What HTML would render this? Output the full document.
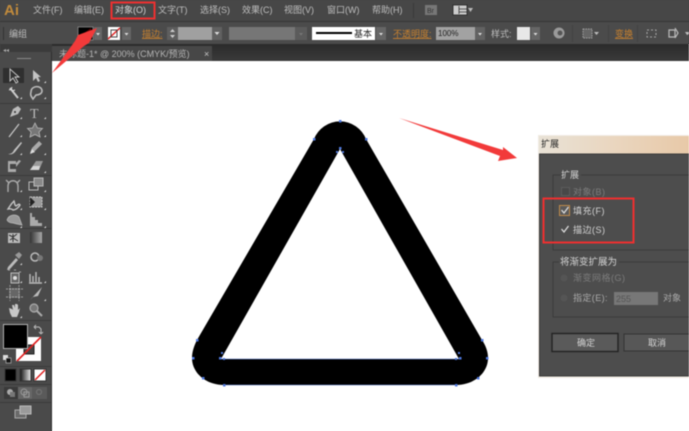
<!DOCTYPE html>
<html><head><meta charset="utf-8">
<style>
html,body{margin:0;padding:0;width:689px;height:431px;overflow:hidden;background:linear-gradient(#474747 0 44px,transparent 0),linear-gradient(90deg,#4a4a4a 0 52px,#fff 0)}
svg{display:block;filter:blur(.4px)}
text{font-family:"Liberation Sans","Noto Sans CJK SC",sans-serif;font-size:9px;fill:#bdbdbd}
.o{fill:#c8812e}
.d{fill:#7c7c7c}
.w{fill:#d4d4d4}
</style></head><body>
<svg width="689" height="431" viewBox="0 0 689 431" xmlns="http://www.w3.org/2000/svg">
<defs>
<linearGradient id="tb" x1="0" y1="0" x2="0" y2="1"><stop offset="0" stop-color="#2b2b2b"/><stop offset="1" stop-color="#3a3a3a"/></linearGradient>
<linearGradient id="tt" x1="0" y1="0" x2="1" y2="0"><stop offset="0" stop-color="#e9e2d6"/><stop offset=".5" stop-color="#ead6bf"/><stop offset="1" stop-color="#e8c9a8"/></linearGradient>
<linearGradient id="gr" x1="0" y1="0" x2="1" y2="0"><stop offset="0" stop-color="#111"/><stop offset="1" stop-color="#eee"/></linearGradient>
<linearGradient id="gs" x1="0" y1="0" x2="1" y2="0"><stop offset="0" stop-color="#333"/><stop offset="1" stop-color="#aaa"/></linearGradient>
</defs>
<!-- chrome -->
<rect width="689" height="21" fill="#474747"/>
<rect y="21" width="689" height="1" fill="#353535"/>
<rect y="22" width="689" height="23" fill="#4b4b4b"/>
<rect y="44" width="689" height="17" fill="url(#tb)"/>
<rect x="0" y="44" width="52" height="387" fill="#4a4a4a"/>
<rect x="51" y="44" width="1" height="387" fill="#2e2e2e"/>
<rect x="52" y="61" width="637" height="370" fill="#fff"/>
<rect x="52" y="46" width="160" height="15" fill="#474747"/>
<rect y="44" width="52" height="8" fill="#3b3b3b"/>
<!-- logo + menu -->
<text x="4" y="15" style="font-size:15px;font-weight:bold;fill:#c08a3c">Ai</text>
<text x="33" y="13">文件(F)</text>
<text x="74" y="13">编辑(E)</text>
<text x="115" y="13" class="w">对象(O)</text>
<text x="158" y="13">文字(T)</text>
<text x="200" y="13">选择(S)</text>
<text x="242" y="13">效果(C)</text>
<text x="284" y="13">视图(V)</text>
<text x="327" y="13">窗口(W)</text>
<text x="372" y="13">帮助(H)</text>
<rect x="413" y="3" width="1" height="15" fill="#393939"/>
<rect x="425" y="5" width="12" height="10" fill="#777"/><text x="427" y="13" style="font-size:7px;fill:#333">Br</text>
<rect x="453" y="5" width="14" height="10" fill="#ccc" stroke="#222" stroke-width=".8"/><path d="M459 6v8M459 9h8M459 12h8" stroke="#333" fill="none" stroke-width=".8"/>
<path d="M468 8h5l-2.500 4z" fill="#bbb"/>
<rect x="111.500" y="2.500" width="43" height="16" fill="none" stroke="#ee3030" stroke-width="2"/>
<!-- control bar -->
<rect x="3" y="27" width="1" height="13" fill="#333"/>
<text x="9" y="37">编组</text>
<rect x="78" y="27" width="15" height="13" fill="#000" stroke="#aaa" stroke-width=".6"/><path d="M79 37l12-9v9z" fill="#900" opacity=".6"/>
<rect x="94" y="27" width="8" height="13" fill="#666"/><path d="M96 33h4l-2 2.500z" fill="#ddd"/>
<rect x="108" y="27" width="12" height="13" fill="#fff"/><path d="M108 39l12-11" stroke="#e02020" stroke-width="1.500"/><rect x="111" y="30" width="6" height="7" fill="none" stroke="#444"/>
<rect x="122" y="27" width="9" height="13" fill="#666"/><path d="M124.500 33h4l-2 2.500z" fill="#ddd"/>
<text x="142" y="37" class="o" text-decoration="underline">描边:</text>
<rect x="167" y="27" width="11" height="13" fill="#5e5e5e"/><path d="M170 32l2.500-3 2.500 3zM170 35l2.500 3 2.500-3z" fill="#ccc"/>
<rect x="178" y="27" width="34" height="13" fill="#a0a0a0"/>
<rect x="212" y="27" width="10" height="13" fill="#616161"/><path d="M214.500 32h5l-2.500 3z" fill="#ddd"/>
<rect x="229" y="27" width="66" height="13" fill="#767676"/>
<rect x="295" y="27" width="12" height="13" fill="#5b5b5b"/><path d="M299 33h4l-2 2.500z" fill="#777"/>
<rect x="312" y="27" width="63" height="13" fill="#fff"/><rect x="316" y="32" width="36" height="2" fill="#000"/>
<text x="354" y="37" style="fill:#222">基本</text>
<rect x="376" y="27" width="10" height="13" fill="#666"/><path d="M379 33h4l-2 2.500z" fill="#ddd"/>
<text x="393" y="37" class="o" text-decoration="underline">不透明度:</text>
<rect x="436" y="27" width="39" height="13" fill="#a2a2a2"/><text x="438" y="36" style="font-size:8px;fill:#222">100%</text>
<rect x="475" y="27" width="10" height="13" fill="#626262"/><path d="M478 33h4l-2 2.500z" fill="#ddd"/>
<text x="491" y="37">样式:</text>
<rect x="517" y="27" width="13" height="13" fill="#e8e8e8"/>
<rect x="531" y="27" width="9" height="13" fill="#666"/><path d="M533.500 33h4l-2 2.500z" fill="#ddd"/>
<circle cx="559" cy="33" r="5.500" fill="#9a9a9a"/><circle cx="560" cy="33" r="2.500" fill="#555"/>
<rect x="583" y="29" width="9" height="9" fill="#666" stroke="#bbb" stroke-width=".7" stroke-dasharray="1.500 1"/><path d="M594 32h5l-2.500 3z" fill="#bbb"/>
<rect x="572" y="25" width="1" height="17" fill="#424242"/><rect x="608" y="25" width="1" height="17" fill="#424242"/><rect x="637" y="25" width="1" height="17" fill="#424242"/>
<text x="615" y="37" class="o" text-decoration="underline">变换</text>
<rect x="647" y="30" width="9" height="7" fill="none" stroke="#c4c4c4" stroke-width=".8" stroke-dasharray="2 2"/>
<path d="M669 30h6v7h-6zM675 28l3 5-3 5" fill="none" stroke="#bbb" stroke-width="1.200"/>
<path d="M685 32h4v2l-2 1z" fill="#bbb"/>
<!-- tab -->
<text x="59" y="57" style="fill:#b4b4b4">未标题-1* @ 200% (CMYK/预览)</text>
<text x="204" y="57" style="fill:#c8c8c8">×</text>
<!-- tool panel -->
<text x="3" y="52" style="font-size:6px;fill:#aaa">◂◂</text>
<rect x="17" y="58" width="14" height="1" fill="#8a8a8a"/>
<rect x="3" y="68" width="21" height="15" fill="#2f2f2f"/>
<g fill="none" stroke="#333" stroke-width="0">
<rect y="103" x="0" width="51" height="1" fill="#3a3a3a"/><rect y="175" x="0" width="51" height="1" fill="#3a3a3a"/><rect y="228" x="0" width="51" height="1" fill="#3a3a3a"/><rect y="320" x="0" width="51" height="1" fill="#3a3a3a"/><rect y="366" x="0" width="51" height="1" fill="#3a3a3a"/><rect y="384" x="0" width="51" height="1" fill="#3a3a3a"/><rect y="402" x="0" width="51" height="1" fill="#3a3a3a"/>
</g>
<!-- row icons -->
<path d="M10 69l0 12 3-3 3 5 2-1-3-5h4z" fill="#333" stroke="#ccc" stroke-width=".9"/>
<path d="M33 70v11l3-3 2 4 2-1-2-4h3z" fill="#c4c4c4"/>
<path d="M10 88l8 10" stroke="#ccc" stroke-width="2"/><path d="M12 87l-1 3M9 90l3-1M15 90l-3 1" stroke="#ddd"/>
<path d="M31 92c0-7 11-7 11-1 0 3-4 4-6 4l-3 4c-2-3-3-4-2-7z" fill="none" stroke="#bbb" stroke-width="1.600"/>
<path d="M10 117l3-8 5-3 3 3-3 5-8 3z" fill="#bbb"/><circle cx="15" cy="112" r="1" fill="#333"/>
<text x="30" y="118" style="font-family:'Liberation Serif',serif;font-size:14px;fill:#bbb">T</text>
<path d="M9 137l10-13" stroke="#c8c8c8" stroke-width="1.200"/>
<path d="M35 123l2.500 5 5 .5-3.500 3.500 1 5-5-2.500-5 2.500 1-5-3.500-3.500 5-.5z" fill="#777" stroke="#bbb" stroke-width=".8"/>
<path d="M8 154c4 0 5-2 6-4l7-8 1 1-7 9c-2 2-4 3-7 2z" fill="#c4c4c4"/>
<path d="M30 153l2-5 7-7 3 3-7 7z" fill="#aaa"/><path d="M30 154l2-5 3 3z" fill="#ddd"/>
<path d="M8 161h8v2l3-3 2 1-5 6v5H8z" fill="#aaa"/><rect x="10" y="164" width="6" height="5" fill="#444"/>
<path d="M30 170l6-9h7l-4 9z" fill="#999"/><path d="M30 170l3-4h7l-1 4z" fill="#d5d5d5"/>
<path d="M8 192v-6c0-7 10-7 10 0v6M6 180l3 3M20 180l-3 3" fill="none" stroke="#aaa" stroke-width="1.400"/>
<rect x="29" y="182" width="9" height="8" fill="#4a4a4a" stroke="#bbb"/><rect x="34" y="178" width="9" height="8" fill="#888" stroke="#bbb"/>
<path d="M8 209c2-3 3-5 6-8 1 2 0 4 2 5 2-1 3-3 4-1-1 2-4 5-7 5-2-2-3-1-5-1z" fill="none" stroke="#c4c4c4" stroke-width="1.400"/>
<rect x="30" y="197" width="12" height="10" fill="#999" stroke="#ccc" stroke-dasharray="2 1"/><path d="M30 197l5 5-5 5z" fill="#222"/>
<path d="M7 220c2-6 9-6 12-3l3 8-5-1-4-1c-3 0-5-1-6-3z" fill="#999" stroke="#bbb" stroke-width=".7"/>
<path d="M30 213h2v4h3v3h3v3h4v3H30z" fill="#aaa"/>
<rect x="8" y="233" width="12" height="10" fill="#bbb"/><path d="M9 235l4 2 4-3M10 240l3-2 5 3M13 234v8" stroke="#333" fill="none"/>
<rect x="30" y="232" width="12" height="11" fill="url(#gs)"/>
<path d="M8 267l8-9 2 2-8 9-3 1z" fill="#bbb"/><path d="M15 255l4-3 3 3-3 4z" fill="#999"/>
<circle cx="35" cy="257" r="4" fill="none" stroke="#bbb" stroke-width="1.500"/><circle cx="40" cy="258" r="3" fill="#777"/>
<rect x="11" y="273" width="8" height="10" fill="#666" stroke="#bbb"/><circle cx="15" cy="278" r="2" fill="#ddd"/><path d="M8 270h2M14 270h2M19 272h2" stroke="#aaa"/>
<path d="M30 282v-8M33 282v-6M36 282v-10M39 282v-5M29 283h13" stroke="#bbb" stroke-width="1.400"/>
<rect x="9" y="288" width="11" height="10" fill="#666"/><path d="M6 289h17M6 297h17M10 285v16M19 285v16" stroke="#bbb" stroke-width=".7" stroke-dasharray="2 1"/>
<path d="M30 300l12-13-4 9-5 1z" fill="#bbb"/>
<path d="M9 308l1 5 2 4h5l2-5 1-4-2 2v-5l-1-1v3-3h-2v4l-1-3h-2l1 5-1-1z" fill="#c8c8c8"/>
<circle cx="34" cy="308" r="4" fill="#777" stroke="#aaa" stroke-width="1.200"/><path d="M37 311l5 5" stroke="#aaa" stroke-width="2"/>
<!-- small triangles -->
<path d="M46 83l-2 0 2-2zM22 99h-2l2-2zM46 99h-2l2-2zM22 119h-2l2-2zM46 119h-2l2-2zM22 137h-2l2-2zM46 137h-2l2-2zM22 155h-2l2-2zM46 155h-2l2-2zM46 173h-2l2-2zM22 192h-2l2-2zM46 192h-2l2-2zM22 210h-2l2-2zM46 210h-2l2-2zM22 228h-2l2-2zM46 228h-2l2-2zM22 265h-2l2-2zM22 283h-2l2-2zM46 283h-2l2-2zM46 301h-2l2-2zM22 318h-2l2-2z" fill="#ddd"/>
<!-- fill / stroke -->
<rect x="16" y="337" width="25" height="24" fill="#fff"/>
<rect x="24" y="345" width="10" height="9" fill="#444" stroke="#222"/>
<path d="M17 361l24-24" stroke="#e02020" stroke-width="1.600"/>
<rect x="3.500" y="324.500" width="24" height="24" fill="#000" stroke="#b0b0b0"/>
<path d="M35 327h4l2 2v4M34 327l2-2M34 327l2 2M41 334l-2-2M41 334l2-2" fill="none" stroke="#bbb"/>
<rect x="3" y="355" width="5" height="5" fill="#ddd"/><rect x="6" y="358" width="5" height="5" fill="#111" stroke="#ccc" stroke-width=".6"/>
<rect x="5" y="369" width="11" height="12" fill="#000" stroke="#333"/>
<rect x="20" y="369" width="11" height="12" fill="url(#gr)" stroke="#333"/>
<rect x="34" y="369" width="12" height="12" fill="#fff" stroke="#333"/><path d="M35 380l10-10" stroke="#e02020" stroke-width="1.500"/>
<rect x="4" y="387" width="14" height="12" fill="#3a3a3a"/><rect x="18" y="387" width="14" height="12" fill="#666"/><rect x="32" y="387" width="15" height="12" fill="#5a5a5a"/>
<circle cx="10" cy="392" r="3" fill="#aaa"/><rect x="10" y="392" width="5" height="5" fill="#777"/>
<circle cx="24" cy="392" r="3" fill="none" stroke="#999"/><rect x="24" y="392" width="5" height="5" fill="none" stroke="#999"/>
<circle cx="39" cy="392" r="2.500" fill="none" stroke="#777"/>
<rect x="15" y="410" width="11" height="8" fill="#6a6a6a" stroke="#aaa"/><rect x="20" y="406" width="11" height="8" fill="#9a9a9a" stroke="#bbb"/>
<!-- triangle -->
<path fill-rule="evenodd" fill="#000" d="M314 139A28 28 0 0 1 366 139L482 340C486 346 488 352 488 358C488 373 474 385 456 385H224C206 385 192 373 192 358C192 352 194 346 197 340ZM340 149L221 359H459Z"/>
<path d="M221 359H459M224 385H456" stroke="#5b7fd8" stroke-width=".6" fill="none"/>
<g fill="#4f78dc"><rect x="339" y="120" width="2.500" height="2.500"/><rect x="313" y="138" width="2.500" height="2.500"/><rect x="365" y="138" width="2.500" height="2.500"/><rect x="339" y="147" width="2.500" height="2.500"/><rect x="336" y="151" width="2" height="2"/><rect x="342" y="151" width="2" height="2"/><rect x="196" y="339" width="2.500" height="2.500"/><rect x="192" y="357" width="2.500" height="2.500"/><rect x="202" y="377" width="2.500" height="2.500"/><rect x="223" y="384" width="2.500" height="2.500"/><rect x="219" y="357" width="2.500" height="2.500"/><rect x="223" y="358" width="2" height="2"/><rect x="221" y="352" width="2" height="2"/><rect x="481" y="339" width="2.500" height="2.500"/><rect x="486" y="357" width="2.500" height="2.500"/><rect x="477" y="377" width="2.500" height="2.500"/><rect x="455" y="384" width="2.500" height="2.500"/><rect x="459" y="357" width="2.500" height="2.500"/><rect x="455" y="358" width="2" height="2"/><rect x="458" y="352" width="2" height="2"/></g>
<!-- dialog -->
<rect x="538" y="135" width="151" height="243" fill="#f0ebe3"/>
<rect x="539" y="136" width="150" height="18" fill="url(#tt)"/>
<rect x="539.500" y="154" width="150" height="222" fill="#4d4d4d" stroke="#3a3a3a" stroke-width="1"/>
<text x="541" y="147" style="fill:#222">扩展</text>
<path d="M561 175H553V250H689M581 175H689" fill="none" stroke="#3c3c3c"/>
<text x="561" y="178" class="w">扩展</text>
<rect x="561.500" y="187.500" width="8" height="8" fill="#484848" stroke="#5c5c5c"/>
<text x="573" y="195" class="d" style="letter-spacing:.5px">对象(B)</text>
<rect x="559.500" y="205.500" width="10" height="10" fill="#5a5a5a" stroke="#c08a4a"/>
<path d="M561.500 210l2.500 3 4.500-6" fill="none" stroke="#ddd" stroke-width="1.300"/>
<text x="573" y="214" class="w" style="letter-spacing:.5px">填充(F)</text>
<rect x="559.500" y="224.500" width="10" height="10" fill="#4d4d4d"/>
<path d="M561.500 229l2.500 3 4.500-6" fill="none" stroke="#ddd" stroke-width="1.300"/>
<text x="573" y="233" class="w" style="letter-spacing:.5px">描边(S)</text>
<rect x="543.500" y="198.500" width="90" height="44" fill="none" stroke="#ee3030" stroke-width="2"/>
<path d="M559 262H553V317H689M619 262H689" fill="none" stroke="#3c3c3c"/>
<text x="560" y="265" class="w" style="font-size:9.500px">将渐变扩展为</text>
<circle cx="564" cy="278" r="3.500" fill="#555"/>
<text x="573" y="281" class="d" style="letter-spacing:.5px">渐变网格(G)</text>
<circle cx="564" cy="298" r="3.500" fill="#555"/>
<text x="573" y="301" style="letter-spacing:.4px;fill:#aaa">指定(E):</text>
<rect x="614" y="292" width="44" height="13" fill="#777"/>
<text x="616" y="302" style="fill:#555;font-size:9px">255</text>
<text x="663" y="301" style="fill:#aaa">对象</text>
<rect x="552" y="333.500" width="66" height="18" fill="#5a5a5a" stroke="#222" stroke-width="1.400"/>
<text x="577" y="346" class="w">确定</text>
<rect x="624" y="334" width="66" height="17" fill="#575757" stroke="#333"/>
<text x="648" y="346" class="w">取消</text>
<!-- arrows -->
<path d="M52 73L75 41 78 35 97 28 89 43 84 46Z" fill="#f23a3a"/>
<path d="M399 118L503 150 503 147 517 158 498 161 500 156Z" fill="#f23a3a"/>
</svg>
</body></html>
